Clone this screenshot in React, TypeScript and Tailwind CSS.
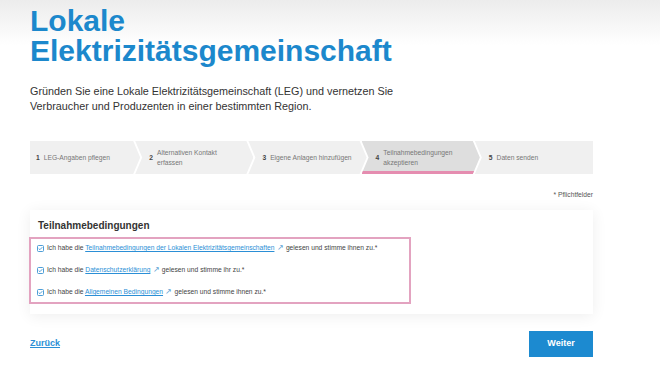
import React from 'react'

const steps = [
    { n: '1', label: ['LEG-Angaben pflegen'] },
    { n: '2', label: ['Alternativen Kontakt', 'erfassen'] },
    { n: '3', label: ['Eigene Anlagen hinzufügen'] },
    { n: '4', label: ['Teilnahmebedingungen', 'akzeptieren'], active: true },
    { n: '5', label: ['Daten senden'] },
]

function Check() {
    return (
        <svg width="7" height="7" viewBox="0 0 7 7" className="flex-shrink-0">
            <rect x="0.5" y="0.5" width="6" height="6" rx="1" fill="white" stroke="#3a93d3" strokeWidth="0.9" />
            <path d="M1.7 3.5l1.2 1.2 2.4-2.5" fill="none" stroke="#3a93d3" strokeWidth="0.9" />
        </svg>
    )
}

function Row({ link, rest }: { link: string; rest: string }) {
    return (
        <div className="flex items-center h-[10px] leading-[10px]">
            <Check />
            <span className="ml-[3px] text-[#444]">
                Ich habe die{' '}
                <a className="text-[#2b8fd6] underline">{link}</a>
                <span className="text-[8px] text-[#5b9fd3]"> ↗ </span> {rest}
            </span>
        </div>
    )
}

export default function App() {
    return (
        <div className="w-[660px] h-[371px] overflow-hidden bg-[linear-gradient(to_bottom,#ececec_0px,#ffffff_45px)] font-['Liberation_Sans',Arial,sans-serif]">
            <div className="ml-[30px] w-[563px] pt-[6px]">
                <h1 className="text-[30px] leading-[30px] font-bold text-[#1c88cc]">
                    Lokale
                    <br />
                    Elektrizitätsgemeinschaft
                </h1>

                <p className="mt-[18px] text-[10.8px] leading-[15px] text-[#333]">
                    Gründen Sie eine Lokale Elektrizitätsgemeinschaft (LEG) und vernetzen Sie
                    <br />
                    Verbraucher und Produzenten in einer bestimmten Region.
                </p>

                <div className="mt-[27px] flex h-[33px]">
                    {steps.map((s, i) => {
                        const clip =
                            i === 0
                                ? '[clip-path:polygon(0_0,calc(100%_-_7px)_0,100%_50%,calc(100%_-_7px)_100%,0_100%)]'
                                : i === steps.length - 1
                                ? '[clip-path:polygon(0_0,100%_0,100%_100%,0_100%,7px_50%)]'
                                : '[clip-path:polygon(0_0,calc(100%_-_7px)_0,100%_50%,calc(100%_-_7px)_100%,0_100%,7px_50%)]'
                        return (
                            <div
                                key={s.n}
                                className={
                                    'relative flex-1 flex items-center text-[6.7px] leading-[10px] text-[#777] ' +
                                    clip +
                                    (i === 0 ? ' pl-[6px]' : ' -ml-[5px] pl-[14px]') +
                                    (s.active ? ' bg-[#dedede]' : ' bg-[#f0f0f0]')
                                }
                            >
                                <span className="font-bold text-[#444] mr-[4px]">{s.n}</span>
                                <span>
                                    {s.label.map((l, j) => (
                                        <span key={j} className="block">
                                            {l}
                                        </span>
                                    ))}
                                </span>
                                {s.active && <div className="absolute left-0 right-0 bottom-0 h-[3px] bg-[#e58db0]"></div>}
                            </div>
                        )
                    })}
                </div>

                <div className="mt-[16px] text-right text-[6.7px] leading-[10px] text-[#555]">* Pflichtfelder</div>

                <div className="mt-[10px] bg-white shadow-[0_2px_14px_rgba(0,0,0,0.07)] pt-[9px] pb-[10px]">
                    <h2 className="pl-[8px] text-[10px] leading-[14px] font-bold text-[#333]">Teilnahmebedingungen</h2>
                    <div className="mt-[4px] -ml-[1px] w-[382px] border-2 border-[#e3a3c0] pt-[4px] pb-[5px] pl-[6px] flex flex-col gap-[12px] text-[6.7px]">
                        <Row link="Teilnahmebedingungen der Lokalen Elektrizitätsgemeinschaften" rest="gelesen und stimme ihnen zu.*" />
                        <Row link="Datenschutzerklärung" rest="gelesen und stimme ihr zu.*" />
                        <Row link="Allgemeinen Bedingungen" rest="gelesen und stimme ihnen zu.*" />
                    </div>
                </div>

                <div className="mt-[17px] flex items-center justify-between">
                    <a className="text-[9px] font-bold text-[#2b8fd6] underline">Zurück</a>
                    <button className="w-[64px] h-[26px] bg-[#1c8ad0] text-white text-[9px] font-bold" type="button">
                        Weiter
                    </button>
                </div>
            </div>
        </div>
    )
}
